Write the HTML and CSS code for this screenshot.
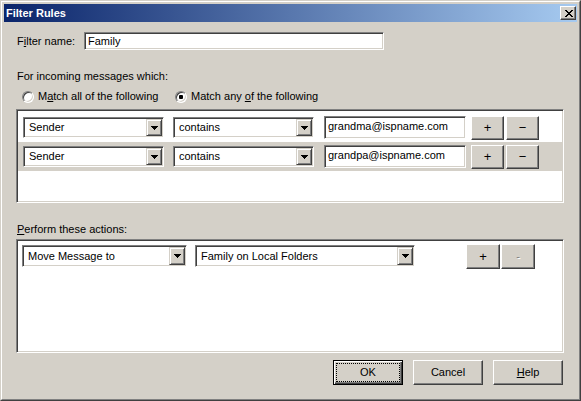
FILE: index.html
```html
<!DOCTYPE html>
<html>
<head>
<meta charset="utf-8">
<title>Filter Rules</title>
<link rel="stylesheet" href="styles.css">
</head>
<body>
<div class="window">
  <div class="window-inner">
    <div class="titlebar">
      <span class="title">Filter Rules</span>
      <div class="close">
        <svg width="8" height="7" viewBox="0 0 8 7" shape-rendering="crispEdges"><path d="M0 0h2v1h-2z M6 0h2v1h-2z M1 1h2v1h-2z M5 1h2v1h-2z M2 2h4v1h-4z M3 3h2v1h-2z M2 4h4v1h-4z M1 5h2v1h-2z M5 5h2v1h-2z M0 6h2v1h-2z M6 6h2v1h-2z" fill="#000"/></svg>
      </div>
    </div>
    <div class="content">
      <div class="name-row">
        <span class="name-lbl">F<u>i</u>lter name:</span>
        <div class="sunken name-field">Family</div>
      </div>
      <div class="section-label">For incoming messages which:</div>
      <div class="radios">
        <div class="radio-item first"><span class="radio"></span><span>M<u>a</u>tch all of the following</span></div>
        <div class="radio-item"><span class="radio checked"></span><span>Match any <u>o</u>f the following</span></div>
      </div>
      <div class="sunken listbox rules">
        <div class="rule-row">
          <div class="sunken combo c1"><span class="combo-text">Sender</span><span class="drop"><svg width="7" height="4" viewBox="0 0 7 4" shape-rendering="crispEdges"><path d="M0 0h7v1h-1v1h-1v1h-1v1h-1v-1h-1v-1h-1v-1h-1z" fill="#000"/></svg></span></div>
          <div class="sunken combo c2"><span class="combo-text">contains</span><span class="drop"><svg width="7" height="4" viewBox="0 0 7 4" shape-rendering="crispEdges"><path d="M0 0h7v1h-1v1h-1v1h-1v1h-1v-1h-1v-1h-1v-1h-1z" fill="#000"/></svg></span></div>
          <div class="sunken value-field">grandma@ispname.com</div>
          <div class="btn small plus">+</div>
          <div class="btn small minus">−</div>
        </div>
        <div class="rule-row selected">
          <div class="sunken combo c1"><span class="combo-text">Sender</span><span class="drop"><svg width="7" height="4" viewBox="0 0 7 4" shape-rendering="crispEdges"><path d="M0 0h7v1h-1v1h-1v1h-1v1h-1v-1h-1v-1h-1v-1h-1z" fill="#000"/></svg></span></div>
          <div class="sunken combo c2"><span class="combo-text">contains</span><span class="drop"><svg width="7" height="4" viewBox="0 0 7 4" shape-rendering="crispEdges"><path d="M0 0h7v1h-1v1h-1v1h-1v1h-1v-1h-1v-1h-1v-1h-1z" fill="#000"/></svg></span></div>
          <div class="sunken value-field">grandpa@ispname.com</div>
          <div class="btn small plus">+</div>
          <div class="btn small minus">−</div>
        </div>
      </div>
      <div class="section-label actions-label"><u>P</u>erform these actions:</div>
      <div class="sunken listbox actions">
        <div class="action-row">
          <div class="sunken combo a1"><span class="combo-text">Move Message to</span><span class="drop"><svg width="7" height="4" viewBox="0 0 7 4" shape-rendering="crispEdges"><path d="M0 0h7v1h-1v1h-1v1h-1v1h-1v-1h-1v-1h-1v-1h-1z" fill="#000"/></svg></span></div>
          <div class="sunken combo a2"><span class="combo-text">Family on Local Folders</span><span class="drop"><svg width="7" height="4" viewBox="0 0 7 4" shape-rendering="crispEdges"><path d="M0 0h7v1h-1v1h-1v1h-1v1h-1v-1h-1v-1h-1v-1h-1z" fill="#000"/></svg></span></div>
          <div class="btn act plus">+</div>
          <div class="btn act minus disabled">-</div>
        </div>
      </div>
      <div class="footer">
        <div class="btn dlg default"><span class="focus">OK</span></div>
        <div class="btn dlg">Cancel</div>
        <div class="btn dlg"><span><u>H</u>elp</span></div>
      </div>
    </div>
  </div>
</div>
</body>
</html>
```
FILE: styles.css
```css
html, body {
  margin: 0;
  padding: 0;
  background: #d4d0c8;
}
body {
  font-family: "Liberation Sans", Arial, sans-serif;
  font-size: 11px;
  color: #000;
}
u {
  text-decoration: underline;
  text-underline-offset: 1px;
}
.window {
  width: 581px;
  height: 401px;
  box-sizing: border-box;
  border: 1px solid;
  border-color: #d4d0c8 #404040 #404040 #d4d0c8;
  background: #d4d0c8;
}
.window-inner {
  height: 100%;
  box-sizing: border-box;
  border: 1px solid;
  border-color: #fff #808080 #808080 #fff;
  padding: 2px;
}
.titlebar {
  height: 18px;
  background: linear-gradient(to right, #0a246a, #a6caf0);
  display: flex;
  align-items: center;
  justify-content: space-between;
  padding: 0 1px 0 2px;
}
.title {
  color: #fff;
  font-weight: bold;
  line-height: 13px;
}
.close {
  width: 16px;
  height: 14px;
  box-sizing: border-box;
  background: #d4d0c8;
  border: 1px solid;
  border-color: #fff #404040 #404040 #fff;
  box-shadow: inset -1px -1px 0 #808080;
  display: flex;
  align-items: center;
  justify-content: center;
  padding-left: 1px;
}
.close svg { display: block; }

.sunken {
  box-sizing: border-box;
  background: #fff;
  border: 1px solid;
  border-color: #808080 #fff #fff #808080;
  box-shadow: inset 1px 1px 0 #404040, inset -1px -1px 0 #d4d0c8;
}

.content {
  padding: 10px 0 0 12px;
}
.name-row {
  display: flex;
  align-items: center;
  height: 18px;
  padding-left: 1px;
}
.name-lbl {
  width: 67px;
  line-height: 13px;
}
.name-field {
  width: 300px;
  height: 18px;
  padding-left: 3px;
  line-height: 16px;
}
.section-label {
  margin-top: 20px;
  height: 13px;
  line-height: 13px;
  padding-left: 1px;
}
.radios {
  display: flex;
  align-items: center;
  margin-top: 7px;
  height: 13px;
  line-height: 13px;
}
.radio-item {
  display: flex;
  align-items: center;
  gap: 4px;
}
.radio-item.first {
  margin-left: 6px;
  width: 153px;
}
.radio {
  width: 12px;
  height: 12px;
  box-sizing: border-box;
  border-radius: 50%;
  background: #fff;
  border: 1px solid;
  border-color: #808080 #fff #fff #808080;
  box-shadow: inset 1px 1px 0 #404040, inset -1px -1px 0 #d4d0c8;
  display: flex;
  align-items: center;
  justify-content: center;
}
.radio.checked::after {
  content: "";
  width: 4px;
  height: 4px;
  background: #000;
  border-radius: 1px;
}

.listbox {
  width: 548px;
}
.rules {
  margin-top: 6px;
  height: 94px;
  padding: 3px 1px 0 1px;
}
.rule-row {
  height: 29px;
  display: flex;
  align-items: center;
  padding-left: 5px;
}
.rule-row.selected {
  background: #d4d0c8;
}
.combo {
  height: 21px;
  padding: 1px;
  display: flex;
  align-items: center;
}
.combo-text {
  flex: 1;
  padding-left: 4px;
  line-height: 13px;
  white-space: nowrap;
  overflow: hidden;
}
.drop {
  width: 16px;
  height: 100%;
  box-sizing: border-box;
  background: #d4d0c8;
  border: 1px solid;
  border-color: #d4d0c8 #404040 #404040 #d4d0c8;
  box-shadow: inset 1px 1px 0 #fff, inset -1px -1px 0 #808080;
  display: flex;
  align-items: center;
  justify-content: center;
}
.drop svg { display: block; }
.c1 { width: 141px; }
.c2 { width: 141px; margin-left: 9px; }
.value-field {
  width: 142px;
  height: 23px;
  margin-left: 10px;
  padding: 3px 0 0 3px;
  line-height: 13px;
  white-space: nowrap;
}

.btn {
  box-sizing: border-box;
  background: #d4d0c8;
  border: 1px solid;
  border-color: #fff #404040 #404040 #fff;
  box-shadow: inset -1px -1px 0 #808080;
  display: flex;
  align-items: center;
  justify-content: center;
  line-height: 13px;
}
.btn.small {
  width: 33px;
  height: 24px;
  font-size: 13px;
}
.rule-row .plus { margin-left: 5px; }
.rule-row .minus { margin-left: 2px; }

.actions-label {
  margin-top: 20px;
}
.actions {
  margin-top: 3px;
  height: 114px;
  padding: 5px 0 0 5px;
}
.action-row {
  display: flex;
  align-items: flex-start;
}
.a1 { width: 165px; height: 22px; }
.a2 { width: 220px; height: 22px; margin-left: 8px; }
.btn.act {
  width: 34px;
  height: 25px;
  margin-top: -1px;
  font-size: 13px;
}
.action-row .plus { margin-left: 51px; }
.action-row .minus { margin-left: 1px; }
.btn.disabled {
  color: #808080;
  text-shadow: 1px 1px 0 #fff;
  font-size: 11px;
}

.footer {
  width: 548px;
  box-sizing: border-box;
  margin-top: 7px;
  padding-right: 1px;
  display: flex;
  justify-content: flex-end;
  gap: 10px;
}
.btn.dlg {
  width: 70px;
  height: 25px;
}
.btn.default {
  border: 1px solid #000;
  box-shadow: inset 1px 1px 0 #fff, inset -1px -1px 0 #404040, inset -2px -2px 0 #808080;
  align-items: stretch;
  justify-content: stretch;
}
.focus {
  flex: 1;
  margin: 2px;
  border: 1px dotted #000;
  display: flex;
  align-items: center;
  justify-content: center;
}
```
